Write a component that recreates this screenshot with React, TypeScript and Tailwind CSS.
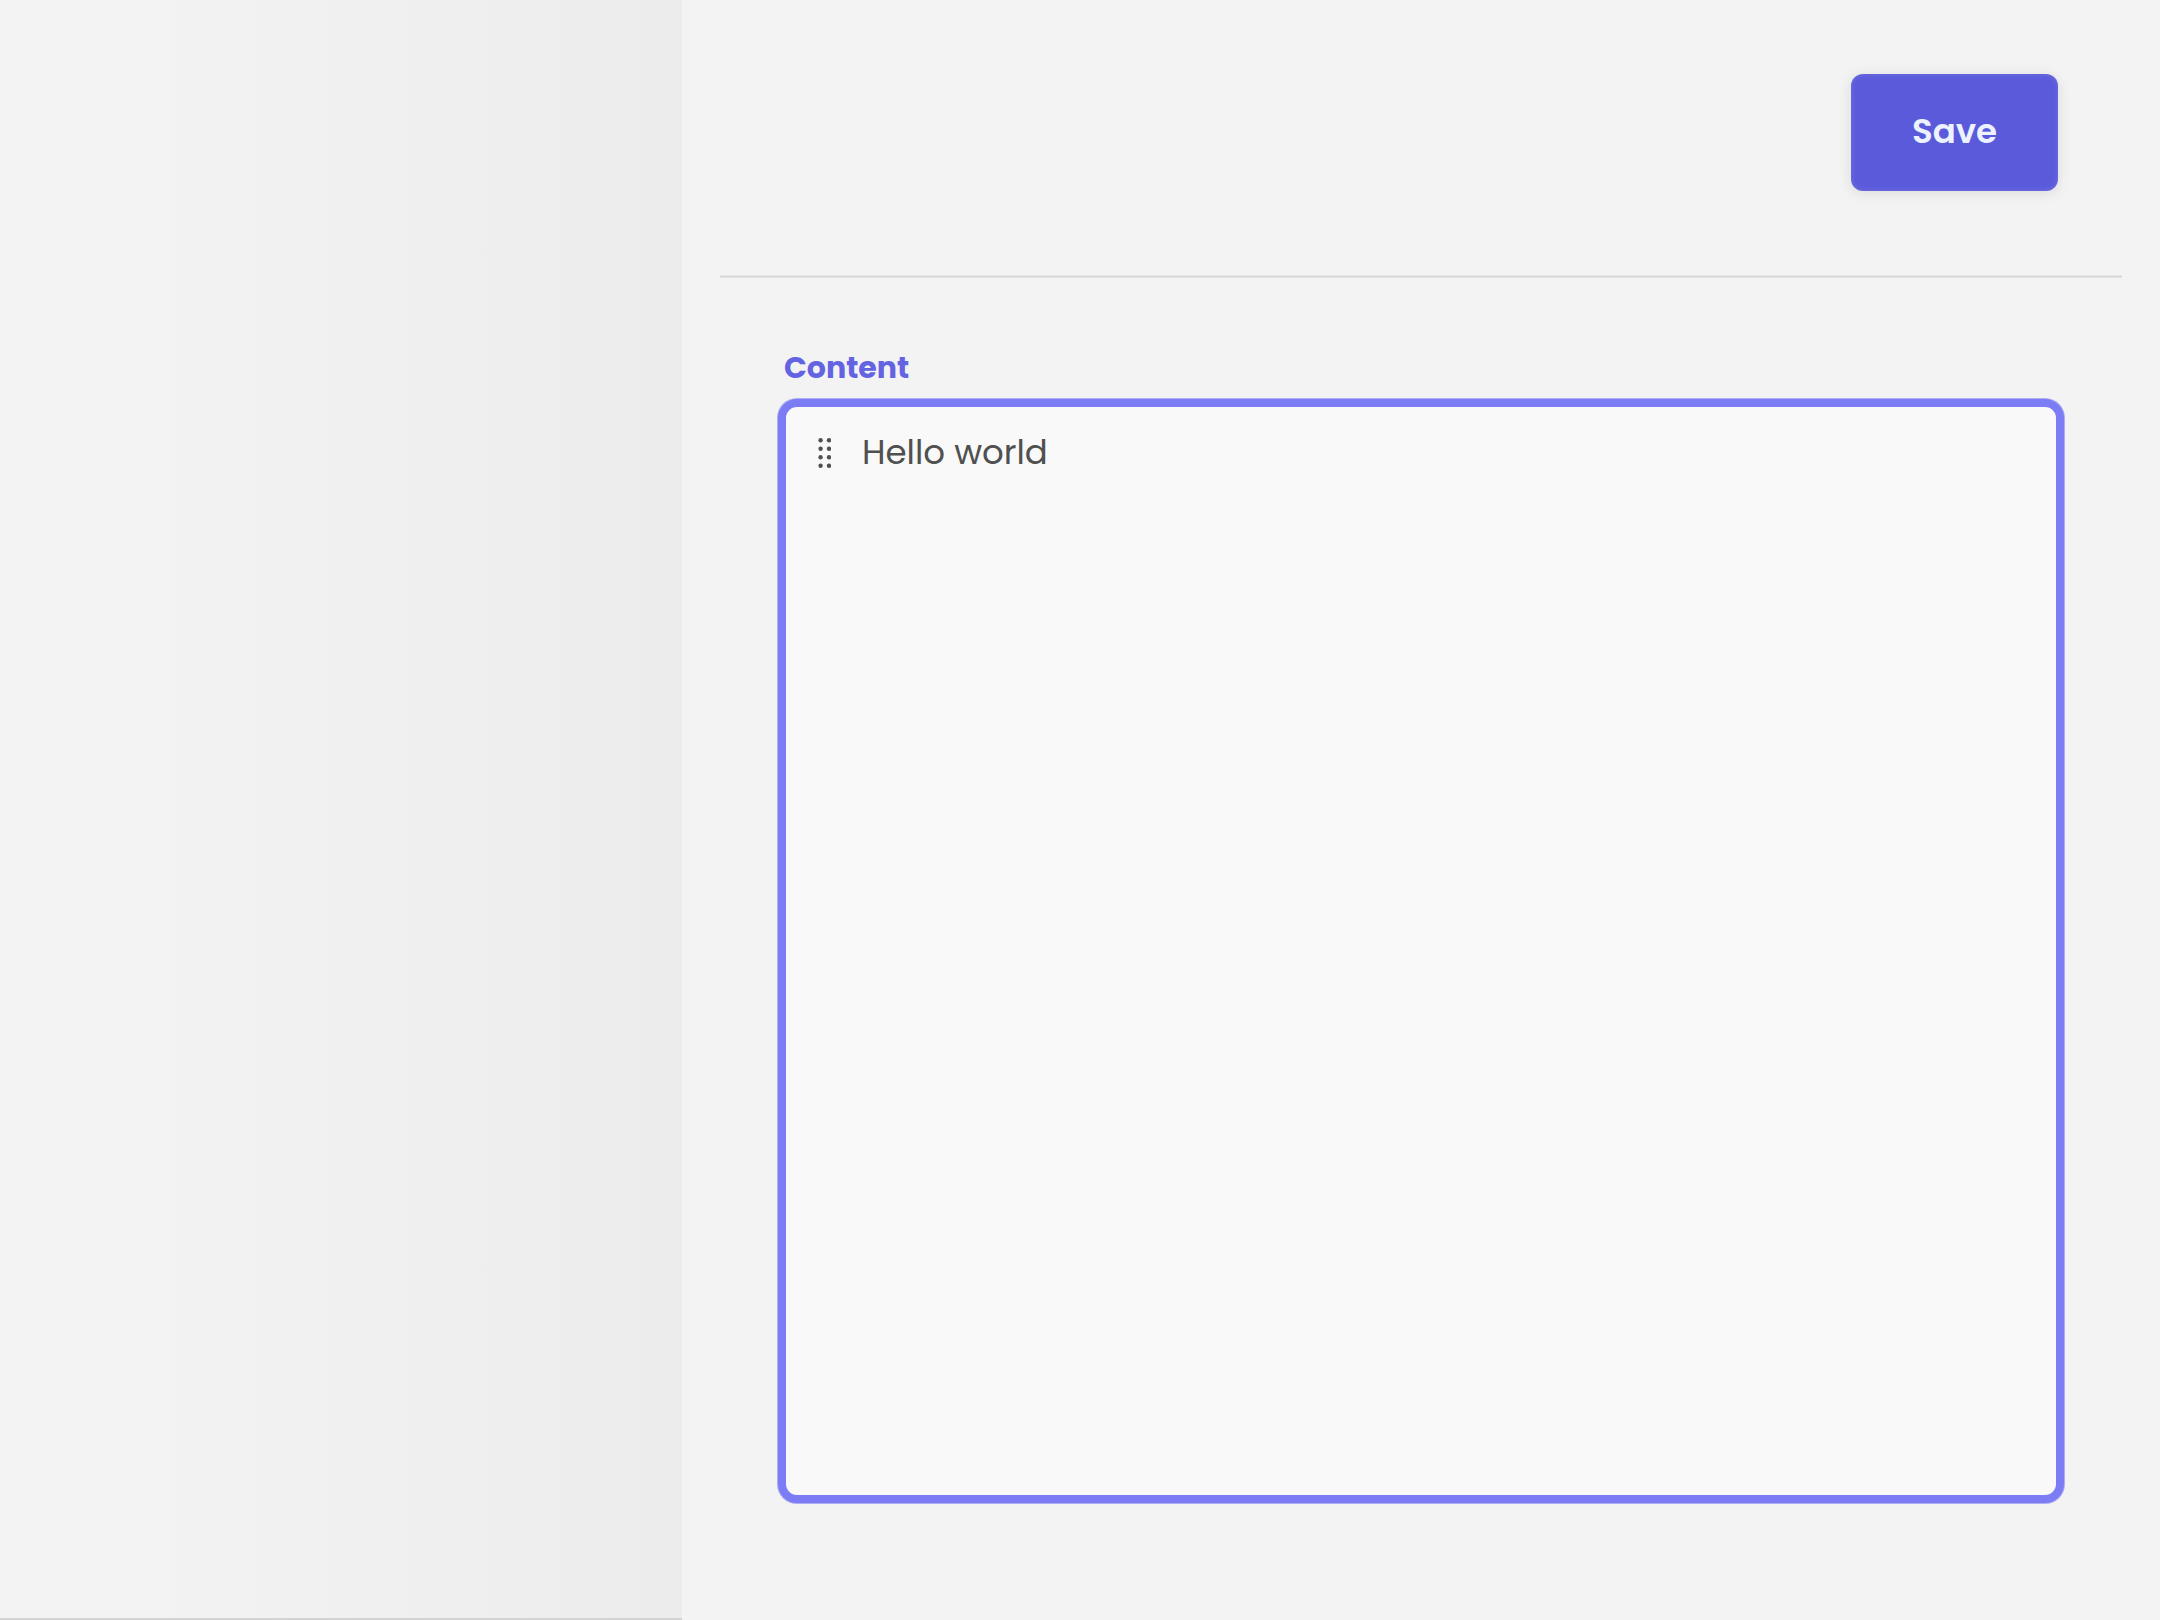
const gripRows = [2.3, 10.8, 19.3, 27.8];

function GripIcon() {
  return (
    <svg viewBox="0 0 13 30" className="mt-[31px] h-[30px] w-[13px] shrink-0" fill="#505050" aria-hidden="true">
      {gripRows.map((y) => (
        <g key={y}>
          <circle cx="2.6" cy={y} r="2.2" />
          <circle cx="11" cy={y} r="2.2" />
        </g>
      ))}
    </svg>
  );
}

export default function App() {
  return (
    <div className="flex min-h-screen bg-[#f3f3f3] font-[Poppins,Inter,sans-serif]">
      <aside className="w-[682px] shrink-0 border-b-2 border-[#d3d3d3] bg-linear-to-r from-[#f3f3f3] from-[20%] to-[#ececec]" />
      <main className="flex min-w-0 flex-1 flex-col px-[38px]">
        <header className="flex justify-end pt-[74px] pr-16 pb-[84px]">
          <button
            type="button"
            className="h-[117px] w-[207px] rounded-xl bg-[#5a5adb] pb-0.5 text-[34px] font-semibold text-[#ecf2ff] shadow-[0_2px_14px_rgba(0,0,0,0.1),inset_0_0_6px_rgba(255,255,255,0.14)]"
          >
            Save
          </button>
        </header>
        <div className="h-[3px] border-y border-[#e6e6e6] bg-[#d4d4d4]" />
        <section className="flex flex-1 flex-col px-[58px] pt-[69px] pb-[117px]">
          <label htmlFor="content" className="mb-2.5 self-start pl-1.5 text-[30px] leading-[42px] font-bold text-[#6464e3]">
            Content
          </label>
          <div className="flex flex-1 rounded-[19px] border-8 border-[#7c7cf4] bg-[#f9f9f9] pr-6 pl-8 shadow-[0_0_0_1px_#adadf3]">
            <GripIcon />
            <textarea
              id="content"
              defaultValue="Hello world"
              className="ml-[31px] flex-1 resize-none bg-transparent pt-[21px] text-[34px] leading-[48px] text-[#505050] outline-none"
            />
          </div>
        </section>
      </main>
    </div>
  );
}
